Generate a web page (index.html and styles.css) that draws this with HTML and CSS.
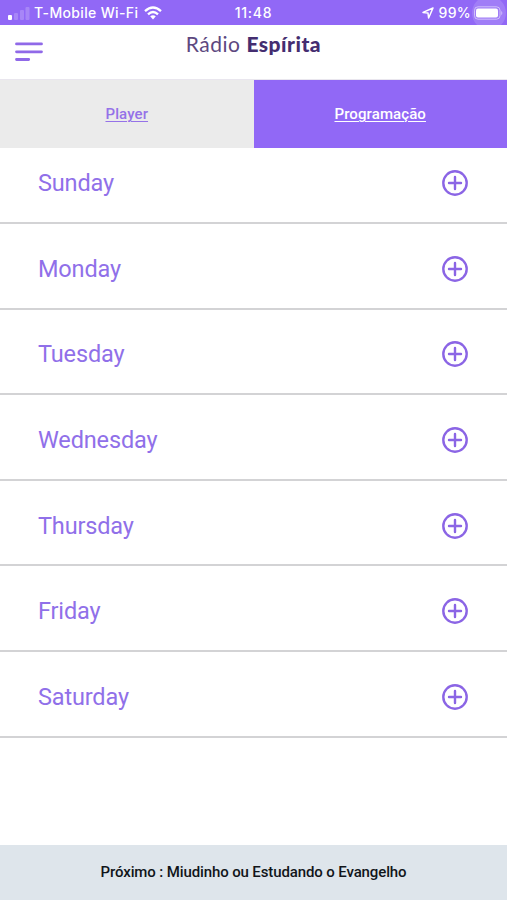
FILE: index.html
```html
<!DOCTYPE html>
<html lang="pt-BR">
<head>
<meta charset="utf-8">
<title>Rádio Espírita</title>
<link rel="stylesheet" href="styles.css">
</head>
<body>
<div class="app">
  <div class="status">
    <div class="carrier">
      <svg class="signal" width="22" height="14" viewBox="0 0 22 14" fill="#fff"><rect x="0" y="9" width="4" height="5" rx="1"/><g opacity=".2"><rect x="6" y="7" width="4" height="7" rx="1"/><rect x="12" y="4" width="4" height="10" rx="1"/><rect x="17.500" y="1" width="4" height="13" rx="1"/></g></svg>
      <span class="network">T-Mobile Wi-Fi</span>
      <svg class="wifi" width="18" height="14" viewBox="0 0 18 14" fill="none" stroke="#fff" stroke-width="2.300"><path d="M1 5.200Q9-2.200 17 5.200M4 8.400Q9 3.600 14 8.400"/><path d="M6.200 10.300Q9 8 11.800 10.300L9 13.400Z" fill="#fff" stroke="none"/></svg>
    </div>
    <span class="clock">11:48</span>
    <div class="power">
      <svg class="location" width="12" height="12" viewBox="0 0 12 12" fill="none" stroke="#fff" stroke-width="1.500" stroke-linejoin="round"><path d="M11 1L1 5.400L6 6L6.600 11Z"/></svg>
      <span class="percent">99%</span>
      <div class="battery-wrap">
        <svg class="battery" width="30" height="14" viewBox="0 0 30 14"><rect x=".5" y=".8" width="25.500" height="12.400" rx="3.500" fill="none" stroke="#fff" stroke-opacity=".5"/><rect x="2" y="2.500" width="22" height="9" rx="2" fill="#fff"/><path d="M27.300 4.700Q29.300 7 27.300 9.300Z" fill="#fff" opacity=".55"/></svg>
      </div>
    </div>
  </div>
  <header class="header">
    <svg class="menu" width="28" height="20" viewBox="0 0 28 20" fill="none" stroke="#9069e8" stroke-width="2.800" stroke-linecap="round"><path d="M1.500 1.900H26.500M1.500 9.800H26.500M1.500 17.500H13.700"/></svg>
    <h1 class="title">Rádio <b>Espírita</b></h1>
  </header>
  <nav class="tabs">
    <a class="tab">Player</a>
    <a class="tab active">Programação</a>
  </nav>
  <main class="days">
    <div class="day"><span>Sunday</span><svg class="plus" viewBox="0 0 26 26"><circle cx="13" cy="13" r="11.700"/><path d="M13 7V19M7 13H19"/></svg></div>
    <div class="day"><span>Monday</span><svg class="plus" viewBox="0 0 26 26"><circle cx="13" cy="13" r="11.700"/><path d="M13 7V19M7 13H19"/></svg></div>
    <div class="day"><span>Tuesday</span><svg class="plus" viewBox="0 0 26 26"><circle cx="13" cy="13" r="11.700"/><path d="M13 7V19M7 13H19"/></svg></div>
    <div class="day"><span>Wednesday</span><svg class="plus" viewBox="0 0 26 26"><circle cx="13" cy="13" r="11.700"/><path d="M13 7V19M7 13H19"/></svg></div>
    <div class="day"><span>Thursday</span><svg class="plus" viewBox="0 0 26 26"><circle cx="13" cy="13" r="11.700"/><path d="M13 7V19M7 13H19"/></svg></div>
    <div class="day"><span>Friday</span><svg class="plus" viewBox="0 0 26 26"><circle cx="13" cy="13" r="11.700"/><path d="M13 7V19M7 13H19"/></svg></div>
    <div class="day"><span>Saturday</span><svg class="plus" viewBox="0 0 26 26"><circle cx="13" cy="13" r="11.700"/><path d="M13 7V19M7 13H19"/></svg></div>
  </main>
  <footer class="next">Próximo : Miudinho ou Estudando o Evangelho</footer>
</div>
</body>
</html>
```
FILE: styles.css
```css
* { box-sizing: border-box; }
body { margin: 0; background: #fff; font-family: Roboto, sans-serif; }
svg { display: block; flex: none; }
.app { height: 900px; display: flex; flex-direction: column; overflow: hidden; }
.status { height: 25px; flex: none; display: grid; grid-template-columns: 1fr auto 1fr; align-items: center; padding: 0 5px 0 8px; background: #9168f6; color: #fff; font: 500 14px/25px Inter, sans-serif; overflow: hidden; }
.carrier, .power { display: flex; align-items: center; height: 25px; }
.signal { margin-top: 1px; }
.network { width: 104px; margin: 0 6px 0 4px; white-space: nowrap; letter-spacing: .35px; }
.clock { margin-right: 3px; letter-spacing: .7px; }
.power { justify-content: flex-end; }
.percent { margin: 0 1px 0 5px; letter-spacing: .3px; }
.battery-wrap { flex: none; display: flex; align-items: center; justify-content: center; width: 34px; height: 34px; margin-right: -4px; border-radius: 50%; background: rgba(255, 255, 255, .14); }
.header { height: 54px; flex: none; display: grid; grid-template-columns: 1fr auto 1fr; align-items: start; padding: 0 15px; }
.menu { margin-top: 17px; }
.title { margin: 5px 0 0; font: 400 21px/28px Lato, sans-serif; letter-spacing: .5px; color: #5d487f; }
.title b { font-weight: 900; color: #442d70; }
.tabs { height: 69px; flex: none; display: flex; border-top: 1px solid #e9e6ee; }
.tab { flex: 1; display: flex; align-items: center; justify-content: center; background: #ebebeb; color: #9572e8; font-size: 15px; font-weight: 500; letter-spacing: .1px; text-decoration: underline; text-decoration-thickness: 1px; text-underline-offset: 2px; }
.tab.active { background: #9168f6; color: #fff; }
.days { flex: 1; margin-top: -9.500px; }
.day { height: 85.600px; display: flex; align-items: center; justify-content: space-between; padding: 6px 39px 0 38px; border-bottom: 2px solid #d3d3d5; color: #9070e9; font-size: 23.500px; letter-spacing: -.15px; }
.plus { width: 26px; height: 26px; fill: none; stroke: #8b65e5; stroke-width: 2.400; stroke-linecap: round; }
.next { height: 55px; flex: none; display: flex; align-items: center; justify-content: center; background: #dee5eb; color: #11151a; font-size: 15px; font-weight: 500; letter-spacing: -.12px; padding-bottom: 1px; }
```
